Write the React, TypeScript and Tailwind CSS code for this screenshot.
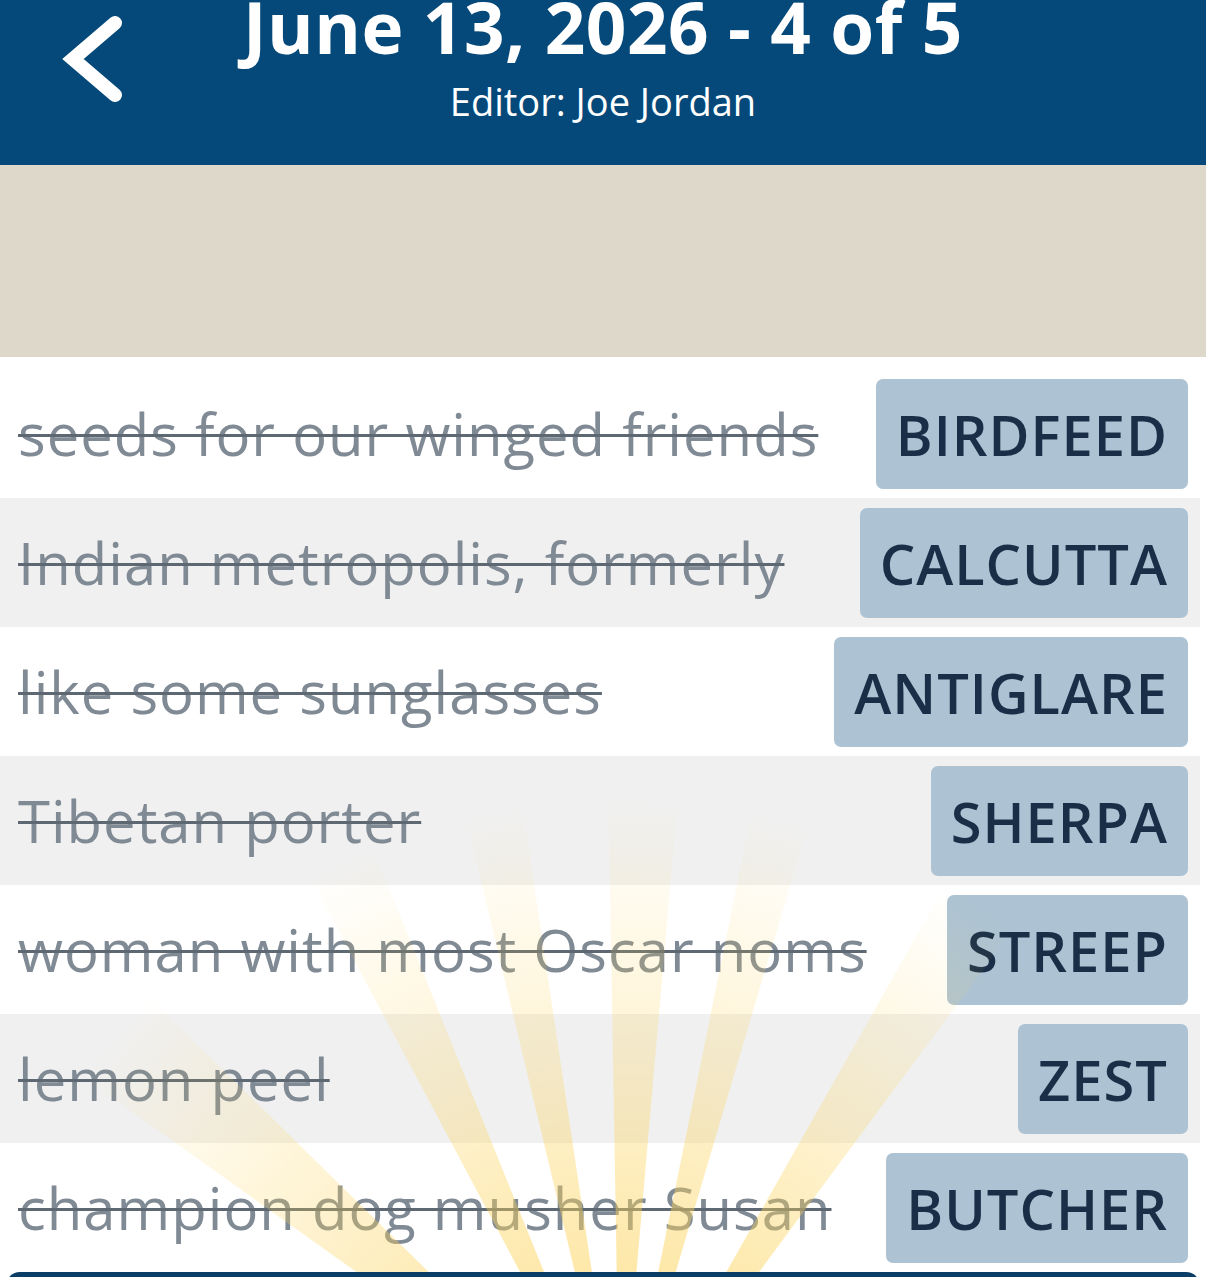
import React from "react";

const CLUES: { clue: string; answer: string }[] = [
  { clue: "seeds for our winged friends", answer: "BIRDFEED" },
  { clue: "Indian metropolis, formerly", answer: "CALCUTTA" },
  { clue: "like some sunglasses", answer: "ANTIGLARE" },
  { clue: "Tibetan porter", answer: "SHERPA" },
  { clue: "woman with most Oscar noms", answer: "STREEP" },
  { clue: "lemon peel", answer: "ZEST" },
  { clue: "champion dog musher Susan", answer: "BUTCHER" },
];

// soft sunburst rays over the lower rows
function Sunburst() {
  const cx = 620;
  const cy = 1460;
  const rays: [number, number][] = [
    [-50, 4.5],
    [-25, 3],
    [-11, 2.5],
    [2, 3],
    [14, 2.5],
    [33, 3.5],
  ];
  const polys = rays.map(([a, w]) => {
    const r = 1400;
    const a1 = ((a - w) * Math.PI) / 180;
    const a2 = ((a + w) * Math.PI) / 180;
    const p1 = `${cx + r * Math.sin(a1)},${cy - r * Math.cos(a1)}`;
    const p2 = `${cx + r * Math.sin(a2)},${cy - r * Math.cos(a2)}`;
    return `${cx},${cy} ${p1} ${p2}`;
  });
  return (
    <svg
      className="pointer-events-none absolute left-0 top-0"
      width="1206"
      height="1277"
      viewBox="0 0 1206 1277"
    >
      <defs>
        <radialGradient id="ray" cx={cx} cy={cy} r="660" gradientUnits="userSpaceOnUse">
          <stop offset="0.25" stopColor="#fcd35a" stopOpacity="0.55" />
          <stop offset="0.6" stopColor="#fcd35a" stopOpacity="0.28" />
          <stop offset="1" stopColor="#fcd35a" stopOpacity="0" />
        </radialGradient>
      </defs>
      {polys.map((pts, i) => (
        <polygon key={i} points={pts} fill="url(#ray)" />
      ))}
    </svg>
  );
}

export default function App() {
  return (
    <div
      className="relative h-[1277px] w-[1206px] overflow-hidden bg-white"
      style={{ fontFamily: '"Open Sans", "Noto Sans", sans-serif' }}
    >
      {/* Header */}
      <div className="relative flex h-[165px] flex-col items-center bg-[#05497a] text-white">
        <svg
          className="absolute left-[60px] top-[15px]"
          width="66"
          height="88"
          viewBox="0 0 66 88"
        >
          <polyline
            points="55,8 13,44 55,80"
            fill="none"
            stroke="white"
            strokeWidth="14"
            strokeLinecap="round"
            strokeLinejoin="miter"
          />
        </svg>
        <div className="-mt-[21px] text-[71px] font-bold leading-[96px] tracking-[0.5px]">
          June 13, 2026 - 4 of 5
        </div>
        <div className="mt-[4px] text-[38px] leading-[44px]">Editor: Joe Jordan</div>
      </div>

      {/* Beige panel */}
      <div className="h-[192px] bg-[#ded8ca]" />

      {/* Clue list */}
      <div className="pt-[12px]">
        {CLUES.map((c, i) => (
          <div
            key={c.answer}
            className={
              "mr-[6px] flex h-[129px] items-center justify-between pl-[18px] pr-[12px] " +
              (i % 2 === 1 ? "bg-[#f0f0f0]" : "bg-white")
            }
          >
            <span className="whitespace-nowrap text-[58px] leading-none tracking-[1px] text-[#808a94] line-through decoration-[#5d6872] decoration-[3px]">
              {c.clue}
            </span>
            <span className="flex h-[110px] items-center rounded-[7px] bg-[#adc3d3] px-[20px] text-[56px] font-semibold leading-none tracking-[1px] text-[#1a2f47]">
              {c.answer}
            </span>
          </div>
        ))}
      </div>

      <Sunburst />

      {/* Bottom bar */}
      <div className="absolute bottom-[-20px] left-[6px] right-[6px] h-[25px] rounded-t-[14px] bg-[#0b3e66]" />
    </div>
  );
}
